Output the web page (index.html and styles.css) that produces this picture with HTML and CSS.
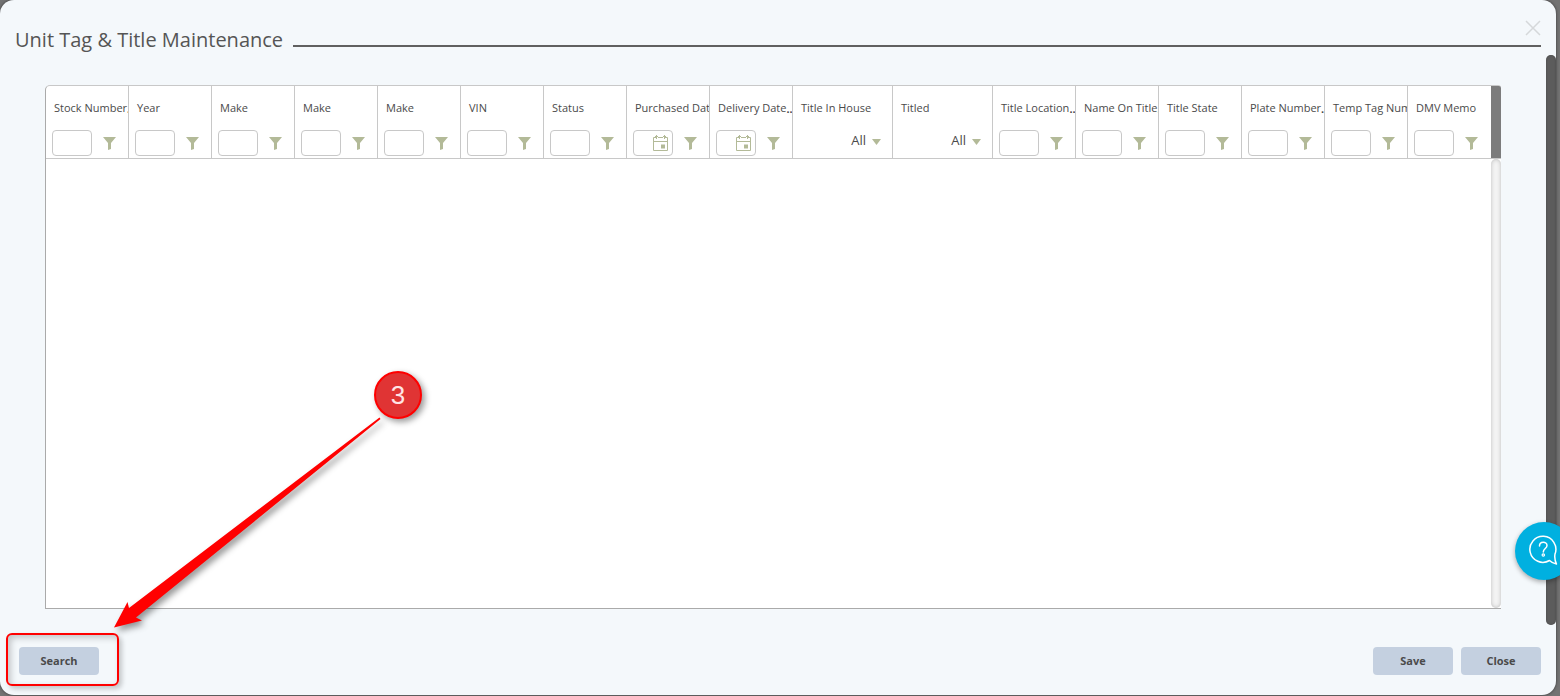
FILE: index.html
```html
<!DOCTYPE html>
<html lang="en">
<head>
<meta charset="utf-8">
<title>Unit Tag &amp; Title Maintenance</title>
<link rel="stylesheet" href="styles.css">
</head>
<body>
<svg class="sprite" aria-hidden="true">
  <symbol id="funnel" viewBox="0 0 13 13"><path d="M0 0h13L8 6v6l-3 1V6z" fill="#b3ba98"/></symbol>
  <symbol id="calendar" viewBox="0 0 15 16"><path d="M3 2.500H.5v13h14v-13H12M5 2.500h5M.5 6.500h14M2 1.500h3M10 1.500h3M3.500 0v4M11.500 0v4" fill="none" stroke="#b3ba98"/><path d="M8 9.500h4v4H8z" fill="#b3ba98"/></symbol>
</svg>
<main class="modal">
  <header class="modal-header">
    <h1 class="title">Unit Tag &amp; Title Maintenance</h1>
    <span class="rule"></span>
    <button class="dismiss" aria-label="Dismiss"><svg viewBox="0 0 16 16"><path d="M1 1l14 14M15 1L1 15" stroke="#d5d8da" stroke-width="1.500"/></svg></button>
  </header>

  <section class="grid">
    <div class="grid-head">
      <table class="columns">
        <thead><tr>
          <th><span class="label">Stock Number<span class="more">...</span></span><div class="filter"><input class="box" aria-label="Stock Number"><button class="funnel" aria-label="Filter Stock Number"><svg><use href="#funnel"/></svg></button></div></th>
          <th><span class="label">Year</span><div class="filter"><input class="box" aria-label="Year"><button class="funnel" aria-label="Filter Year"><svg><use href="#funnel"/></svg></button></div></th>
          <th><span class="label">Make</span><div class="filter"><input class="box" aria-label="Make"><button class="funnel" aria-label="Filter Make"><svg><use href="#funnel"/></svg></button></div></th>
          <th><span class="label">Make</span><div class="filter"><input class="box" aria-label="Make"><button class="funnel" aria-label="Filter Make"><svg><use href="#funnel"/></svg></button></div></th>
          <th><span class="label">Make</span><div class="filter"><input class="box" aria-label="Make"><button class="funnel" aria-label="Filter Make"><svg><use href="#funnel"/></svg></button></div></th>
          <th><span class="label">VIN</span><div class="filter"><input class="box" aria-label="VIN"><button class="funnel" aria-label="Filter VIN"><svg><use href="#funnel"/></svg></button></div></th>
          <th><span class="label">Status</span><div class="filter"><input class="box" aria-label="Status"><button class="funnel" aria-label="Filter Status"><svg><use href="#funnel"/></svg></button></div></th>
          <th><span class="label">Purchased Date</span><div class="filter"><div class="box date"><input class="date-text" aria-label="Purchased Date"><button class="calendar" aria-label="Pick purchased date"><svg><use href="#calendar"/></svg></button></div><button class="funnel" aria-label="Filter Purchased Date"><svg><use href="#funnel"/></svg></button></div></th>
          <th><span class="label">Delivery Date<span class="more">...</span></span><div class="filter"><div class="box date"><input class="date-text" aria-label="Delivery Date"><button class="calendar" aria-label="Pick delivery date"><svg><use href="#calendar"/></svg></button></div><button class="funnel" aria-label="Filter Delivery Date"><svg><use href="#funnel"/></svg></button></div></th>
          <th class="wide"><span class="label">Title In House</span><div class="filter choice"><select class="pick" aria-label="Title In House"><option>All</option></select><svg class="caret" viewBox="0 0 9 6"><path d="M0 0h9L4.500 6z" fill="#b3ba98"/></svg></div></th>
          <th class="wide"><span class="label">Titled</span><div class="filter choice"><select class="pick" aria-label="Titled"><option>All</option></select><svg class="caret" viewBox="0 0 9 6"><path d="M0 0h9L4.500 6z" fill="#b3ba98"/></svg></div></th>
          <th><span class="label">Title Location<span class="more">...</span></span><div class="filter"><input class="box" aria-label="Title Location"><button class="funnel" aria-label="Filter Title Location"><svg><use href="#funnel"/></svg></button></div></th>
          <th><span class="label">Name On Title<span class="more">...</span></span><div class="filter"><input class="box" aria-label="Name On Title"><button class="funnel" aria-label="Filter Name On Title"><svg><use href="#funnel"/></svg></button></div></th>
          <th><span class="label">Title State</span><div class="filter"><input class="box" aria-label="Title State"><button class="funnel" aria-label="Filter Title State"><svg><use href="#funnel"/></svg></button></div></th>
          <th><span class="label">Plate Number<span class="more">...</span></span><div class="filter"><input class="box" aria-label="Plate Number"><button class="funnel" aria-label="Filter Plate Number"><svg><use href="#funnel"/></svg></button></div></th>
          <th><span class="label">Temp Tag Number</span><div class="filter"><input class="box" aria-label="Temp Tag Number"><button class="funnel" aria-label="Filter Temp Tag Number"><svg><use href="#funnel"/></svg></button></div></th>
          <th><span class="label">DMV Memo</span><div class="filter"><input class="box" aria-label="DMV Memo"><button class="funnel" aria-label="Filter DMV Memo"><svg><use href="#funnel"/></svg></button></div></th>
        </tr></thead>
      </table>
      <span class="head-end"></span>
    </div>
    <div class="grid-body"><span class="track"></span></div>
  </section>

  <footer class="actions">
    <div class="search">
      <button class="btn">Search</button>
      <span class="highlight"></span>
      <svg class="arrow" viewBox="0 0 280 220" aria-hidden="true"><path d="M267.500 7.500L268.500 9 24 207.500l6 3L2 217.500 15.500 192l1.500 6z" fill="#f00"/></svg>
      <span class="step">3</span>
    </div>
    <button class="btn">Save</button>
    <button class="btn">Close</button>
  </footer>
  <span class="page-thumb"></span>
</main>
<button class="help" aria-label="Help"><svg viewBox="0 0 30 32" fill="none" stroke="#fff" stroke-width="1.500"><path d="M20.500 25.500A13 13 0 1 1 26 19c-.5 3 0 7 1.500 10-2.500-.5-5-1.500-7-3.500z" stroke-linejoin="round"/><path d="M10.500 11c0-5 7.500-5 7.500-.5 0 3-3.700 3-3.700 6.500" stroke-linecap="round"/><circle cx="14.300" cy="20" r="1.200" stroke-width="1.200"/></svg></button>
</body>
</html>
```

FILE: styles.css
```css
* { box-sizing: border-box; }

body {
  margin: 0;
  min-height: 100vh;
  padding: 0 4px 1px 0;
  display: flex;
  background: #737373;
  color: #4a4a4a;
  font-family: "Open Sans", sans-serif;
}

button, input, select { font: inherit; color: inherit; }
button { padding: 0; border: 0; background: none; cursor: pointer; }
svg { display: block; }
.sprite { position: absolute; width: 0; height: 0; }

.modal {
  position: relative;
  flex: 1;
  min-width: 0;
  display: flex;
  flex-direction: column;
  padding: 26px 15px 20px;
  border-radius: 14px;
  background: #f4f8fb;
  box-shadow: 0 0 3px #333;
}

.modal-header { display: flex; align-items: flex-start; gap: 10px; }
.title { margin: 0; font-size: 20px; line-height: 28px; font-weight: 400; color: #555; }
.rule { flex: 1; height: 2px; margin-top: 19px; background: #606060; }
.dismiss { position: absolute; top: 20px; right: 15px; width: 16px; height: 16px; }

.grid {
  flex: 1;
  display: flex;
  flex-direction: column;
  margin: 31px 40px 38px 30px;
  border: 1px solid #c8c8c8;
  border-right: 0;
  border-bottom-color: #aaa;
  border-left-color: #aaa;
  border-radius: 5px 3px 0 0;
  background: #fff;
}
.grid-head { display: flex; border-bottom: 1px solid #c8c8c8; }
.head-end { flex: none; width: 10px; background: #7c7c7c; border-radius: 0 2px 0 0; }
.columns { flex: 1; width: 100%; min-width: 0; table-layout: fixed; border-collapse: separate; border-spacing: 0; }
.columns th { width: 83px; padding: 14px 0 2px; border-right: 1px solid #c8c8c8; overflow: hidden; font-weight: 400; text-align: left; }
.columns th:last-child { border-right: 0; }
.columns .wide { width: 100px; }

.label { display: block; padding-left: 8px; overflow: hidden; white-space: nowrap; font-size: 11px; line-height: 16px; }
.more { font-family: "Liberation Sans", sans-serif; font-weight: 700; line-height: 1; vertical-align: -1px; }

.filter { display: flex; align-items: center; gap: 11px; height: 26px; margin: 14px 6px 0; }
.box { flex: none; width: 40px; height: 26px; padding: 0 4px; border: 1px solid #c8c8c8; border-radius: 4px; background: #fff; font-size: 13px; }
.date { display: flex; align-items: center; }
.date-text { flex: 1; min-width: 0; width: 0; padding: 0; border: 0; background: none; }
.calendar svg { width: 15px; height: 16px; }
.funnel svg { width: 13px; height: 13px; }
.choice { justify-content: flex-end; gap: 6px; padding: 0 5px 6px 0; }
.pick { width: 40px; padding: 0; border: 0; background: none; appearance: none; font-size: 13px; line-height: 18px; text-align-last: right; }
.caret { width: 9px; height: 6px; margin-top: 4px; }

.grid-body { flex: 1; display: flex; justify-content: flex-end; }
.track { width: 10px; border-radius: 5px; background: #f4f4f4; box-shadow: inset 0 0 4px #bbb; }

.actions { display: flex; gap: 8px; padding-left: 4px; }
.search { position: relative; margin-right: auto; }
.btn { display: block; width: 80px; height: 28px; padding-bottom: 2px; border-radius: 4px; background: #c4d0e0; font-size: 11px; font-weight: 700; }

.highlight {
  position: absolute;
  left: -13px;
  top: -14px;
  width: 113px;
  height: 53px;
  border: 2px solid #f00;
  border-radius: 6px;
  box-shadow: 3px 3px 5px #0003, inset 3px 3px 6px #0003;
  pointer-events: none;
}
.arrow {
  position: absolute;
  left: 93px;
  bottom: 45px;
  width: 280px;
  height: 220px;
  overflow: visible;
  filter: drop-shadow(3px 4px 3px #0006);
  pointer-events: none;
}
.step {
  position: absolute;
  left: 355px;
  bottom: 256px;
  width: 48px;
  height: 48px;
  border: 2px solid #f00;
  border-radius: 50%;
  background: #e03434;
  box-shadow: 3px 3px 6px #0006;
  color: #ffe5e5;
  font-family: "Liberation Sans", sans-serif;
  font-size: 26px;
  line-height: 44px;
  text-align: center;
}

.page-thumb { position: absolute; top: 55px; bottom: 70px; right: 0; width: 10px; border-radius: 5px; background: #5c5c5c; box-shadow: inset 0 0 2px #444; }

.help {
  position: fixed;
  right: -13px;
  bottom: 116px;
  width: 58px;
  height: 58px;
  padding-left: 14px;
  border-radius: 50%;
  background: #00b0e0;
  box-shadow: 0 2px 5px #0005;
}
.help svg { width: 30px; height: 32px; }
```
